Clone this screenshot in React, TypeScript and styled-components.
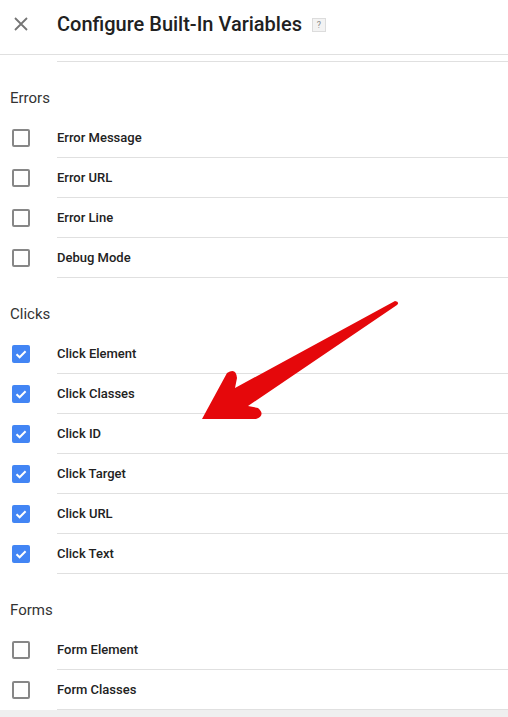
import React from 'react'
import styled, { createGlobalStyle } from 'styled-components'

const GlobalStyle = createGlobalStyle`
    html, body {
        margin: 0;
        padding: 0;
        background: #fff;
    }
    body {
        font-family: Roboto, 'Noto Sans', Arial, sans-serif;
        -webkit-font-smoothing: antialiased;
    }
`;

const Page = styled.div`
    position: relative;
    width: 508px;
    height: 717px;
    overflow: hidden;
    background: #fff;
`;

const Header = styled.div`
    display: flex;
    align-items: center;
    height: 48px;
    padding-bottom: 6px;
    border-bottom: 1px solid #e0e0e0;
`;

const CloseButton = styled.div`
    width: 57px;
    display: flex;
    justify-content: flex-start;
    padding-left: 14px;
    box-sizing: border-box;
    color: #757575;
`;

const Title = styled.h1`
    margin: 0;
    font-size: 20px;
    font-weight: 500;
    color: #212121;
    letter-spacing: 0;
`;

const HelpBox = styled.span`
    display: inline-flex;
    align-items: center;
    justify-content: center;
    width: 12px;
    height: 12px;
    margin-left: 10px;
    margin-top: 2px;
    border: 1px solid #dcdcdc;
    background: #f3f3f3;
    color: #8a8a8a;
    font-size: 9px;
    line-height: 1;
`;

const Body = styled.div`
    padding-top: 6px;
`;

const TopRule = styled.div`
    margin-left: 57px;
    border-bottom: 1px solid #e0e0e0;
`;

const SectionTitle = styled.div`
    padding: 26px 0 10px 10px;
    line-height: 20px;
    font-size: 15px;
    color: #333;
`;

const Row = styled.div`
    display: flex;
    align-items: stretch;
    height: 40px;
`;

const BoxCell = styled.div`
    width: 57px;
    display: flex;
    align-items: center;
    padding-left: 12px;
    box-sizing: border-box;
`;

const Box = styled.div<{ $checked: boolean }>`
    width: 18px;
    height: 18px;
    box-sizing: border-box;
    border-radius: 2px;
    display: flex;
    align-items: center;
    justify-content: center;
    border: ${p => (p.$checked ? 'none' : '2px solid #878787')};
    background: ${p => (p.$checked ? '#4285f4' : '#fff')};
`;

const Label = styled.div`
    flex: 1;
    display: flex;
    align-items: center;
    border-bottom: 1px solid #e0e0e0;
    font-size: 13px;
    font-weight: 500;
    color: #222;
`;

const Footer = styled.div`
    height: 8px;
    background: #efefef;
`;

const ArrowLayer = styled.svg`
    position: absolute;
    left: 0;
    top: 0;
    pointer-events: none;
`;

const sections = [
    {
        title: 'Errors',
        items: [
            { name: 'Error Message', checked: false },
            { name: 'Error URL', checked: false },
            { name: 'Error Line', checked: false },
            { name: 'Debug Mode', checked: false },
        ],
    },
    {
        title: 'Clicks',
        items: [
            { name: 'Click Element', checked: true },
            { name: 'Click Classes', checked: true },
            { name: 'Click ID', checked: true },
            { name: 'Click Target', checked: true },
            { name: 'Click URL', checked: true },
            { name: 'Click Text', checked: true },
        ],
    },
    {
        title: 'Forms',
        items: [
            { name: 'Form Element', checked: false },
            { name: 'Form Classes', checked: false },
        ],
    },
]

const Checkbox = ({ checked }: { checked: boolean }) => (
    <Box $checked={checked}>
        {checked && (
            <svg width="18" height="18" viewBox="0 0 18 18">
                <polyline points="4.5,9.3 7.6,12.3 13.6,6.2" fill="none" stroke="#fff" strokeWidth="2" />
            </svg>
        )}
    </Box>
)

const App = () => {
    return (
        <Page>
            <GlobalStyle />
            <Header>
                <CloseButton>
                    <svg width="14" height="14" viewBox="0 0 14 14">
                        <path d="M1 1 L13 13 M13 1 L1 13" stroke="#757575" strokeWidth="1.8" />
                    </svg>
                </CloseButton>
                <Title>Configure Built-In Variables</Title>
                <HelpBox>?</HelpBox>
            </Header>
            <Body>
                <TopRule />
                {sections.map(section => (
                    <div key={section.title}>
                        <SectionTitle>{section.title}</SectionTitle>
                        {section.items.map(item => (
                            <Row key={item.name}>
                                <BoxCell>
                                    <Checkbox checked={item.checked} />
                                </BoxCell>
                                <Label>{item.name}</Label>
                            </Row>
                        ))}
                    </div>
                ))}
                <Footer />
            </Body>
            {/* annotation arrow drawn over the list */}
            <ArrowLayer width="508" height="717" viewBox="0 0 508 717">
                <path
                    d="M395 301 L235 388 L237 378 Q236 367 227 373 L202 419 L256 419 Q266 415 258 408 L248 406 L397 305 Q400 302 395 301 Z"
                    fill="#e5080b"
                />
            </ArrowLayer>
        </Page>
    )
}

export default App
